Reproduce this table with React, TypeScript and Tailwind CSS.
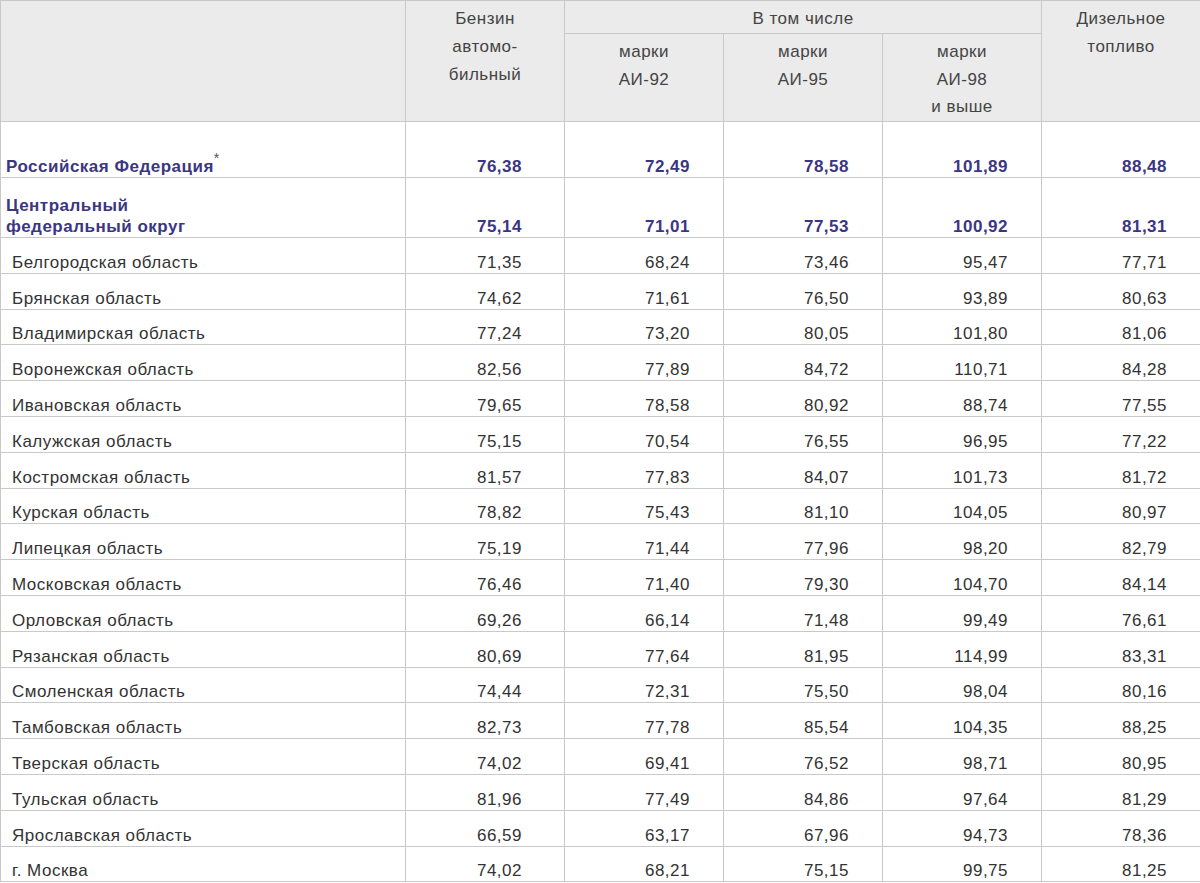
const regions: [string, string, string, string, string, string][] = [
  ["Белгородская область", "71,35", "68,24", "73,46", "95,47", "77,71"],
  ["Брянская область", "74,62", "71,61", "76,50", "93,89", "80,63"],
  ["Владимирская область", "77,24", "73,20", "80,05", "101,80", "81,06"],
  ["Воронежская область", "82,56", "77,89", "84,72", "110,71", "84,28"],
  ["Ивановская область", "79,65", "78,58", "80,92", "88,74", "77,55"],
  ["Калужская область", "75,15", "70,54", "76,55", "96,95", "77,22"],
  ["Костромская область", "81,57", "77,83", "84,07", "101,73", "81,72"],
  ["Курская область", "78,82", "75,43", "81,10", "104,05", "80,97"],
  ["Липецкая область", "75,19", "71,44", "77,96", "98,20", "82,79"],
  ["Московская область", "76,46", "71,40", "79,30", "104,70", "84,14"],
  ["Орловская область", "69,26", "66,14", "71,48", "99,49", "76,61"],
  ["Рязанская область", "80,69", "77,64", "81,95", "114,99", "83,31"],
  ["Смоленская область", "74,44", "72,31", "75,50", "98,04", "80,16"],
  ["Тамбовская область", "82,73", "77,78", "85,54", "104,35", "88,25"],
  ["Тверская область", "74,02", "69,41", "76,52", "98,71", "80,95"],
  ["Тульская область", "81,96", "77,49", "84,86", "97,64", "81,29"],
  ["Ярославская область", "66,59", "63,17", "67,96", "94,73", "78,36"],
  ["г. Москва", "74,02", "68,21", "75,15", "99,75", "81,25"],
];

const cell = "border border-[#c9c9c9] align-bottom pb-0 leading-[21px]";
const num = (first: boolean) => (first ? "text-right pr-[42px]" : "text-right pr-[33px]");

function BoldRow({ name, values, height }: { name: React.ReactNode; values: string[]; height: string }) {
  return (
    <tr className={height}>
      <td className={`${cell} pl-[5px] font-bold text-[#3b3682]`}>{name}</td>
      {values.map((v, i) => (
        <td key={i} className={`${cell} ${num(i === 0)} font-bold text-[#3b3682]`}>
          {v}
        </td>
      ))}
    </tr>
  );
}

export default function App() {
  return (
    <div className="w-[1200px] h-[883px] overflow-hidden bg-white">
      <table
        className="w-[1200px] border-collapse table-fixed text-[17px] tracking-[0.5px] text-[#333]"
        style={{ fontFamily: '"Liberation Sans", Arial, sans-serif' }}
      >
        <colgroup>
          <col className="w-[405px]" />
          <col className="w-[159px]" />
          <col className="w-[159px]" />
          <col className="w-[159px]" />
          <col className="w-[159px]" />
          <col className="w-[159px]" />
        </colgroup>
        <thead className="bg-[#ebebeb] text-[#444] font-normal">
          <tr className="h-[33px]">
            <th rowSpan={2} className="border border-[#c9c9c9]"></th>
            <th rowSpan={2} className="border border-[#c9c9c9] align-top pt-[4px] font-normal leading-[28px]">
              Бензин
              <br />
              автомо-
              <br />
              бильный
            </th>
            <th colSpan={3} className="border border-[#c9c9c9] align-top pt-[4px] font-normal leading-[28px]">
              В том числе
            </th>
            <th rowSpan={2} className="border border-[#c9c9c9] align-top pt-[4px] font-normal leading-[28px]">
              Дизельное
              <br />
              топливо
            </th>
          </tr>
          <tr className="h-[88px]">
            <th className="border border-[#c9c9c9] align-top pt-[4px] font-normal leading-[27.5px]">
              марки
              <br />
              АИ-92
            </th>
            <th className="border border-[#c9c9c9] align-top pt-[4px] font-normal leading-[27.5px]">
              марки
              <br />
              АИ-95
            </th>
            <th className="border border-[#c9c9c9] align-top pt-[4px] font-normal leading-[27.5px]">
              марки
              <br />
              АИ-98
              <br />
              и выше
            </th>
          </tr>
        </thead>
        <tbody>
          <BoldRow
            height="h-[56px]"
            name={
              <>
                Российская Федерация
                <sup className="relative -top-[9px] text-[14px] font-normal text-[#555]">*</sup>
              </>
            }
            values={["76,38", "72,49", "78,58", "101,89", "88,48"]}
          />
          <BoldRow
            height="h-[60px]"
            name={
              <>
                Центральный
                <br />
                федеральный округ
              </>
            }
            values={["75,14", "71,01", "77,53", "100,92", "81,31"]}
          />
          {regions.map(([name, ...values]) => (
            <tr key={name} className="h-[35.8px]">
              <td className={`${cell} pl-[11px]`}>{name}</td>
              {values.map((v, i) => (
                <td key={i} className={`${cell} ${num(i === 0)}`}>
                  {v}
                </td>
              ))}
            </tr>
          ))}
        </tbody>
      </table>
    </div>
  );
}
